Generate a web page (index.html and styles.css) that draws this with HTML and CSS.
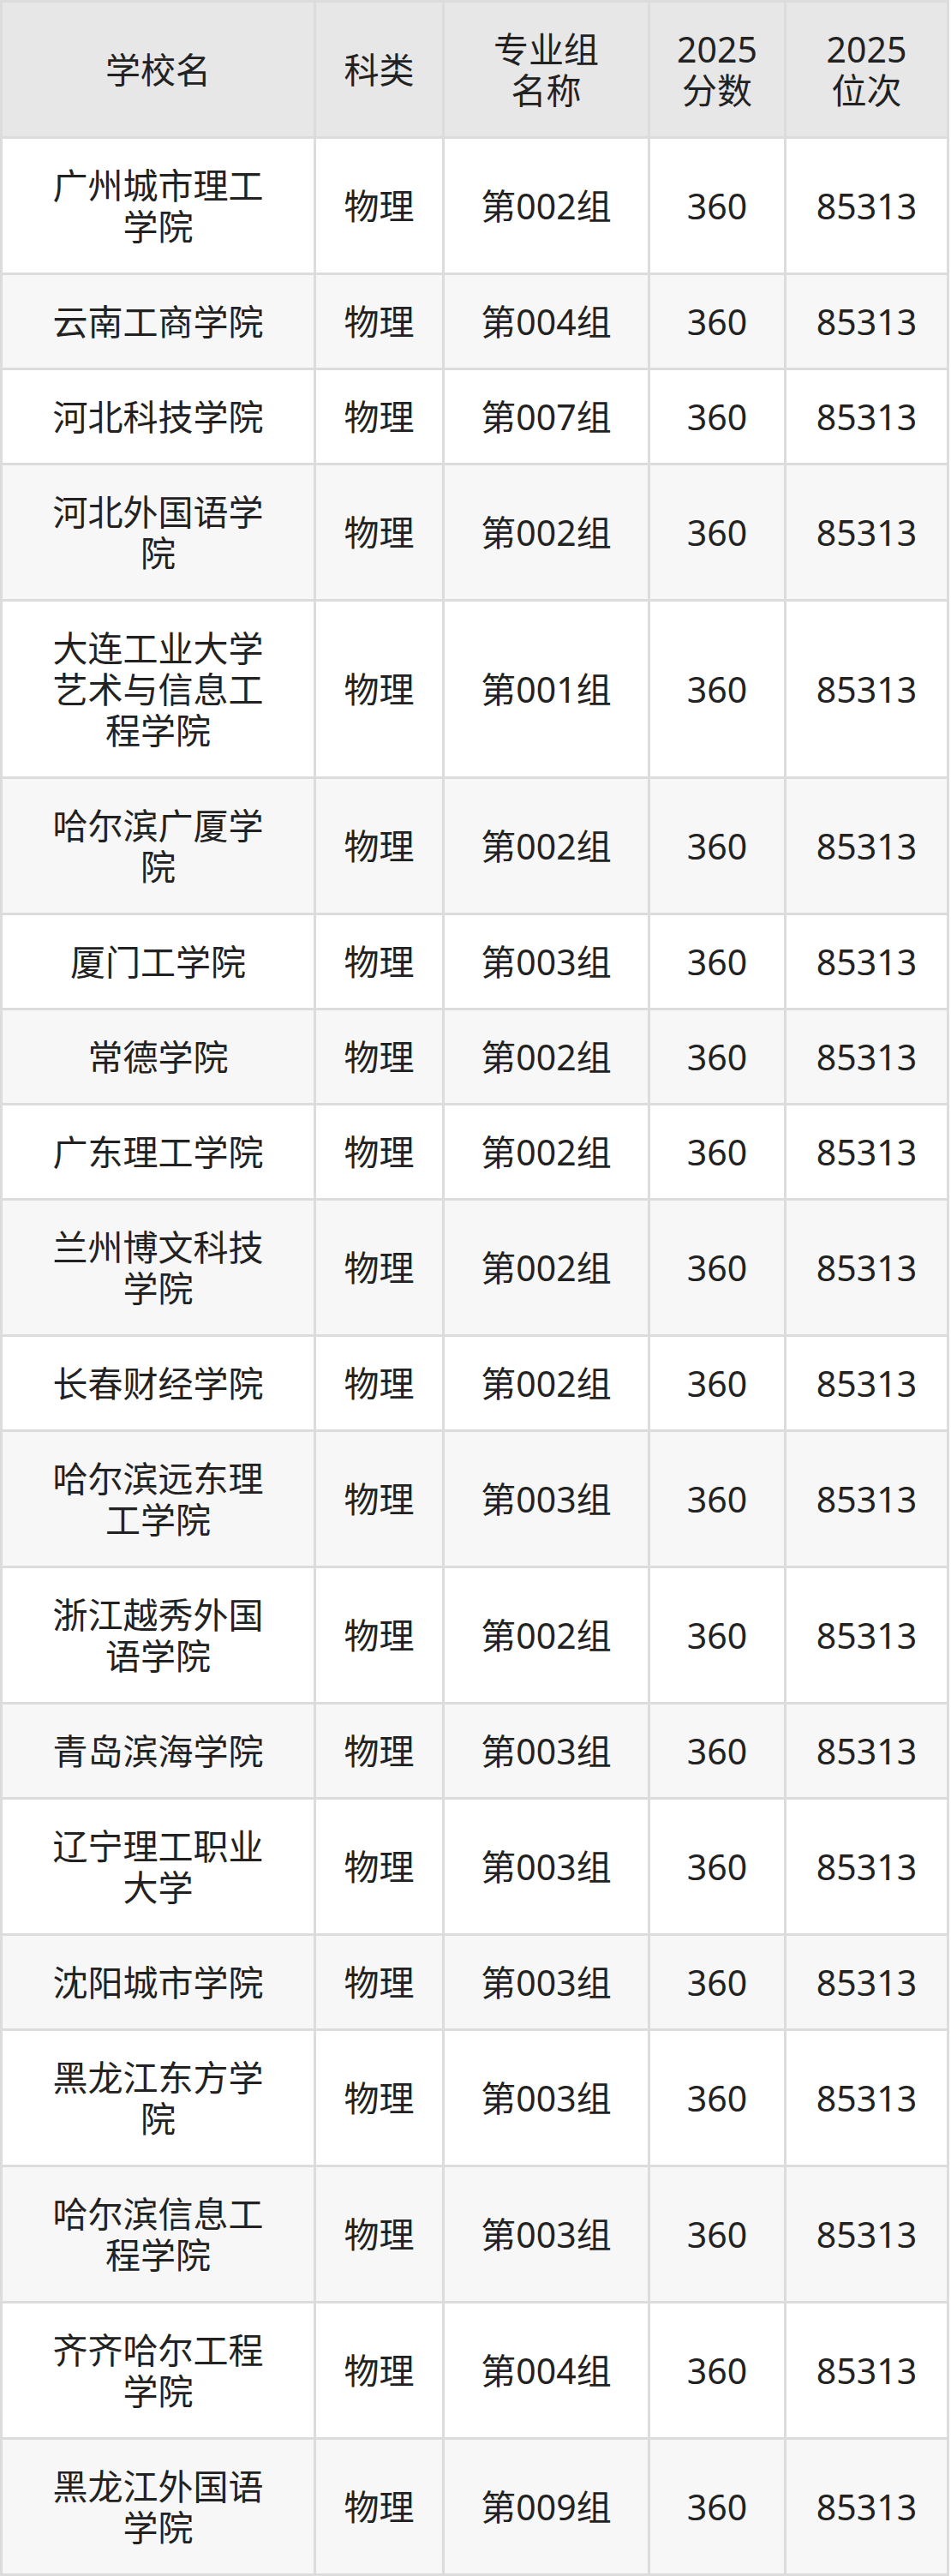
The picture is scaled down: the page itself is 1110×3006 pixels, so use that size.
FILE: index.html
```html
<!DOCTYPE html>
<html lang="zh-CN">
<head>
<meta charset="utf-8">
<title>2025 分数位次</title>
<link rel="stylesheet" href="styles.css">
</head>
<body>
<table class="score-table">
  <colgroup>
    <col class="c-name">
    <col class="c-type">
    <col class="c-group">
    <col class="c-score">
    <col class="c-rank">
  </colgroup>
  <thead>
    <tr>
      <th>学校名</th>
      <th>科类</th>
      <th><span class="wrap-cjk">专业组名称</span></th>
      <th><span class="wrap-num">2025分数</span></th>
      <th><span class="wrap-num">2025位次</span></th>
    </tr>
  </thead>
  <tbody>
    <tr><td>广州城市理工学院</td><td>物理</td><td>第002组</td><td>360</td><td>85313</td></tr>
    <tr><td>云南工商学院</td><td>物理</td><td>第004组</td><td>360</td><td>85313</td></tr>
    <tr><td>河北科技学院</td><td>物理</td><td>第007组</td><td>360</td><td>85313</td></tr>
    <tr><td>河北外国语学院</td><td>物理</td><td>第002组</td><td>360</td><td>85313</td></tr>
    <tr><td>大连工业大学艺术与信息工程学院</td><td>物理</td><td>第001组</td><td>360</td><td>85313</td></tr>
    <tr><td>哈尔滨广厦学院</td><td>物理</td><td>第002组</td><td>360</td><td>85313</td></tr>
    <tr><td>厦门工学院</td><td>物理</td><td>第003组</td><td>360</td><td>85313</td></tr>
    <tr><td>常德学院</td><td>物理</td><td>第002组</td><td>360</td><td>85313</td></tr>
    <tr><td>广东理工学院</td><td>物理</td><td>第002组</td><td>360</td><td>85313</td></tr>
    <tr><td>兰州博文科技学院</td><td>物理</td><td>第002组</td><td>360</td><td>85313</td></tr>
    <tr><td>长春财经学院</td><td>物理</td><td>第002组</td><td>360</td><td>85313</td></tr>
    <tr><td>哈尔滨远东理工学院</td><td>物理</td><td>第003组</td><td>360</td><td>85313</td></tr>
    <tr><td>浙江越秀外国语学院</td><td>物理</td><td>第002组</td><td>360</td><td>85313</td></tr>
    <tr><td>青岛滨海学院</td><td>物理</td><td>第003组</td><td>360</td><td>85313</td></tr>
    <tr><td>辽宁理工职业大学</td><td>物理</td><td>第003组</td><td>360</td><td>85313</td></tr>
    <tr><td>沈阳城市学院</td><td>物理</td><td>第003组</td><td>360</td><td>85313</td></tr>
    <tr><td>黑龙江东方学院</td><td>物理</td><td>第003组</td><td>360</td><td>85313</td></tr>
    <tr><td>哈尔滨信息工程学院</td><td>物理</td><td>第003组</td><td>360</td><td>85313</td></tr>
    <tr><td>齐齐哈尔工程学院</td><td>物理</td><td>第004组</td><td>360</td><td>85313</td></tr>
    <tr><td>黑龙江外国语学院</td><td>物理</td><td>第009组</td><td>360</td><td>85313</td></tr>
  </tbody>
</table>
</body>
</html>
```

FILE: styles.css
```css
html, body {
  margin: 0;
  padding: 0;
  background: #ffffff;
}

body {
  font-family: "Noto Sans", "Noto Sans CJK SC", sans-serif;
  color: #222222;
}

.score-table {
  width: 1108px;
  table-layout: fixed;
  border-collapse: collapse;
  border: 3px solid #dcdcdc;
  font-size: 41px;
  line-height: 48px;
}

.c-name { width: 366px; }
.c-type { width: 150px; }
.c-group { width: 240px; }
.c-score { width: 159px; }
.c-rank { width: 190px; }

.score-table th,
.score-table td {
  border: 3px solid #dcdcdc;
  padding: 30px 6px;
  text-align: center;
  vertical-align: middle;
  font-weight: 400;
}

.score-table th {
  background: #e7e7e7;
}

.wrap-cjk {
  display: inline-block;
  max-width: 3.2em;
}

.wrap-num {
  display: inline-block;
  max-width: 2.6em;
}

.score-table td:first-child {
  padding-left: 45px;
  padding-right: 45px;
}

.score-table tbody tr:nth-child(even) td {
  background: #f7f7f7;
}
```
